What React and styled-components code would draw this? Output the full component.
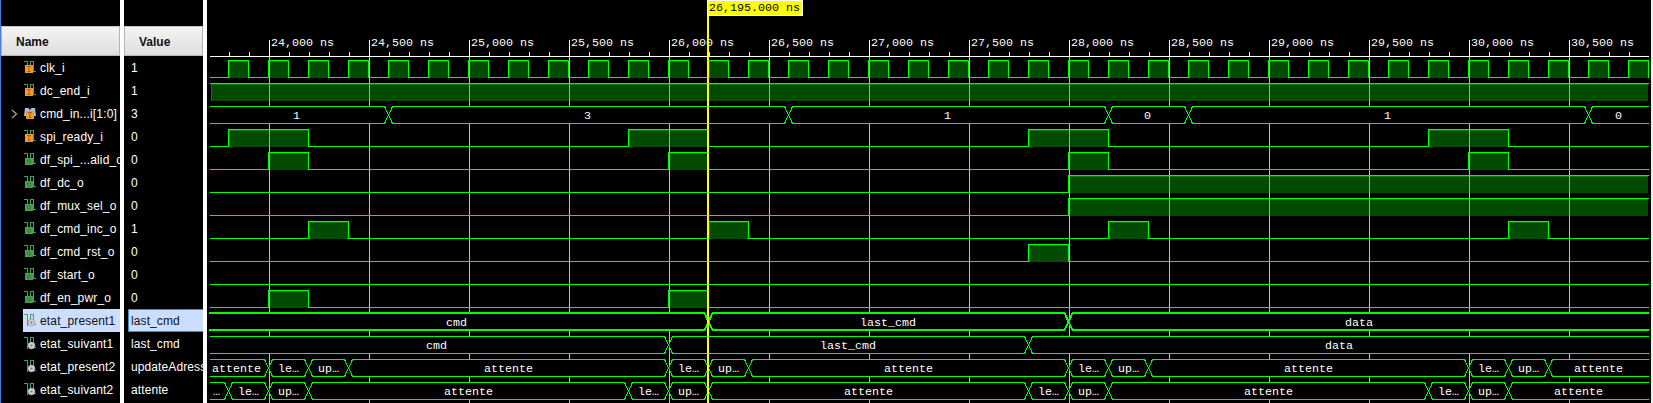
import React from "react";
import styled, { createGlobalStyle, css } from "styled-components";

const GlobalStyle = createGlobalStyle`
  html, body, #root { margin: 0; padding: 0; height: 100%; }
  body { background: #f4f2f0; overflow: hidden; }
  * { box-sizing: border-box; }
`;

const GREEN = "#00ff00";
const FILL = "#004b00";
const EDGE = "#008000";
const GRID = "#c0c0c0";
const START = 210;
const END = 1649;

const Window = styled.div`
  display: flex;
  width: 1653px;
  height: 403px;
  border-left: 1px solid #4a7fd0;
  background: #ffffff;
  font-family: "Liberation Sans", Arial, sans-serif;
  font-size: 12px;
  overflow: hidden;
`;

const Column = styled.section`
  flex: none;
  width: ${(p) => p.$width}px;
  margin-right: 4px;
  padding-top: 26px;
  background: #000;
  overflow: hidden;
`;

const ColumnHeader = styled.header`
  height: 30px;
  padding: 1px 0 0 ${(p) => p.$indent}px;
  border: 1px solid #b4b4b4;
  border-top-color: #c4c4c4;
  background: linear-gradient(#f4f4f4, #dedee0);
  color: #111;
  font-weight: bold;
  line-height: 28px;
`;

const NameRow = styled.div`
  display: flex;
  align-items: center;
  height: 23px;
  margin-left: 22px;
  padding-left: 1px;
  white-space: nowrap;
  color: ${(p) => (p.$selected ? "#111" : "#fff")};
  background: ${(p) => (p.$selected ? "#ccdeff" : "transparent")};
`;

const Expander = styled.svg`
  flex: none;
  margin-left: -13px;
  margin-right: 6px;
`;

const SignalIcon = styled.svg`
  flex: none;
  margin-right: 4px;
`;

const SignalName = styled.span`
  padding-top: 2px;
  letter-spacing: 0.15px;
  line-height: 21px;
`;

const ValueRow = styled.div`
  height: 23px;
  margin-left: 4px;
  padding: 1px 0 0 3px;
  line-height: 23px;
  white-space: nowrap;
  letter-spacing: 0.1px;
  color: #fff;
  ${(p) =>
    p.$selected &&
    css`
      padding-left: 2px;
      line-height: 21px;
      color: #111;
      background: #ccdeff;
      border: 1px solid #3a8ddb;
      border-right: 0;
    `}
`;

const WavePanel = styled.section`
  position: relative;
  flex: none;
  width: 1444px;
  height: 403px;
  background: #000;
`;

const Plot = styled.svg`
  display: block;
  shape-rendering: crispEdges;
  text {
    font-family: "Liberation Mono", "Courier New", monospace;
    font-size: 11.67px;
    fill: #fff;
    white-space: pre;
  }
`;

const CursorLabel = styled.div`
  position: absolute;
  left: 500px;
  top: 0;
  width: 96px;
  height: 16px;
  padding: 1px 0 0 1px;
  border: 1px solid #fff;
  background: #ffff00;
  color: #000;
  font: 11.67px/13px "Liberation Mono", "Courier New", monospace;
  white-space: nowrap;
`;

const EdgeStrip = styled.div`
  width: 2px;
  background: #f0eeec;
`;

const stateCycle = ["attente", "le…", "up…"];
const cycle = (n, first) => Array.from({ length: n }, (_, i) => first || i ? stateCycle[i % 3] : "…");

const signals = [
  { name: "clk_i", value: "1", icon: "in", pulses: Array.from({ length: 36 }, (_, i) => [228 + i * 40, 248 + i * 40]) },
  { name: "dc_end_i", value: "1", icon: "in", pulses: [[START, END]] },
  { name: "cmd_in...i[1:0]", value: "3", icon: "bus", cuts: [388, 788, 1108, 1188, 1588], labels: ["1", "3", "1", "0", "1", "0"] },
  { name: "spi_ready_i", value: "0", icon: "in", pulses: [[228, 308], [628, 708], [1028, 1108], [1428, 1508]] },
  { name: "df_spi_...alid_o", value: "0", icon: "out", pulses: [[268, 308], [668, 708], [1068, 1108], [1468, 1508]] },
  { name: "df_dc_o", value: "0", icon: "out", pulses: [[1068, END]] },
  { name: "df_mux_sel_o", value: "0", icon: "out", pulses: [[1068, END]] },
  { name: "df_cmd_inc_o", value: "1", icon: "out", pulses: [[308, 348], [708, 748], [1108, 1148], [1508, 1548]] },
  { name: "df_cmd_rst_o", value: "0", icon: "out", pulses: [[1028, 1068]] },
  { name: "df_start_o", value: "0", icon: "out", pulses: [] },
  { name: "df_en_pwr_o", value: "0", icon: "out", pulses: [[268, 308], [668, 708]] },
  { name: "etat_present1", value: "last_cmd", icon: "state", selected: true, cuts: [708, 1068], labels: ["cmd", "last_cmd", "data"] },
  { name: "etat_suivant1", value: "last_cmd", icon: "state", cuts: [668, 1028], labels: ["cmd", "last_cmd", "data"] },
  {
    name: "etat_present2", value: "updateAdress", icon: "state",
    cuts: [268, 308, 348, 668, 708, 748, 1068, 1108, 1148, 1468, 1508, 1548], labels: cycle(13, true),
  },
  {
    name: "etat_suivant2", value: "attente", icon: "state",
    cuts: [228, 268, 308, 628, 668, 708, 1028, 1068, 1108, 1428, 1468, 1508], labels: cycle(13, false),
  },
];

function KindIcon({ kind }) {
  const trace = "#3fa35a";
  return (
    <SignalIcon width="12" height="13" viewBox="0 0 12 13">
      {kind === "bus" ? (
        <path d="M1 1h3.500l1.500 2l1.500-2H11l1 8H0z" fill="#9cc4dc" />
      ) : (
        <path
          d="M0 0.500H3.500V12M6.500 11V0.500H9.500V10.500H11.500"
          fill="none" stroke={trace} strokeWidth="1.200" shapeRendering="crispEdges"
        />
      )}
      {(kind === "in" || kind === "bus") && (
        <g transform={kind === "bus" ? "translate(1 0)" : undefined}>
          <path d="M1 4H9V12H1z" fill="#f39a2d" />
          <path d="M3 5.500H7M5 5.500V10.500M3.500 10.500H6.500" stroke="#a8621c" fill="none" />
        </g>
      )}
      {kind === "out" && (
        <>
          <path d="M1 5H9V12H1z" fill="#4a9f4c" />
          <circle cx="5" cy="8.500" r="1.700" fill="none" stroke="#2c7434" />
        </>
      )}
      {kind === "state" && (
        <>
          <circle cx="7.500" cy="8.500" r="3.500" fill="#d0d0d0" stroke="#8c8c8c" strokeWidth=".6" />
          <circle cx="7.500" cy="8.500" r="1.100" fill="#777" />
        </>
      )}
    </SignalIcon>
  );
}

function Digital({ y, pulses }) {
  let d = "";
  let x = START;
  pulses.forEach(([a, b]) => {
    if (a > START) d += `M${x} ${y + 17.5}H${a + 0.5}V${y}`;
    d += `M${a} ${y + 0.5}`;
    const end = Math.min(b, END);
    d += `H${end === END ? END : end + 0.5}`;
    if (end < END) d += `V${y + 17.5}`;
    x = end;
  });
  if (x < END) d += `M${x} ${y + 17.5}H${END}`;
  return (
    <g>
      {pulses.map(([a, b]) => {
        const w = Math.min(b, END - 1) - a - 1;
        return (
          <g key={a}>
            <rect x={a + 1} y={y + 1} width={w} height="17" fill={EDGE} />
            <rect x={a + 2} y={y + 2} width={w - 1} height="16" fill={FILL} />
          </g>
        );
      })}
      <path d={d} fill="none" stroke={GREEN} />
    </g>
  );
}

function Bus({ y, cuts, labels, selected }) {
  const top = y + (selected ? 0 : 0.5);
  const bottom = y + (selected ? 17 : 17.5);
  const mid = y + 9;
  const left = selected ? START - 1 : START;
  return (
    <g>
      {labels.map((label, i) => {
        const a = i ? cuts[i - 1] + 0.5 : null;
        const b = i < cuts.length ? cuts[i] + 0.5 : null;
        const lx = a === null ? left : a + 4;
        const rx = b === null ? END : b - 4;
        const side = (level) =>
          `${a === null ? `M${lx} ${level}` : `M${a} ${mid}L${lx} ${level}`}H${rx}${b === null ? "" : `L${b} ${mid}`}`;
        const hull = `M${a ?? lx} ${mid}L${lx} ${top}H${rx}L${b ?? rx} ${mid}L${rx} ${bottom}H${lx}z`;
        const center = ((i ? cuts[i - 1] : 205) + (i < cuts.length ? cuts[i] : END)) / 2;
        const offset = center - label.length * 3.5;
        return (
          <g key={i}>
            <path d={hull} fill="#000" />
            <path d={side(top) + side(bottom)} fill="none" stroke={GREEN} strokeWidth={selected ? 2 : 1} />
            <text x={label.length > 1 ? Math.round(offset) : Math.floor(offset)} y={y + 13}>{label}</text>
          </g>
        );
      })}
    </g>
  );
}

function Waveforms() {
  const majors = Array.from({ length: 14 }, (_, i) => 269 + i * 100);
  const minors = Array.from({ length: 71 }, (_, i) => 229 + i * 20);
  return (
    <Plot width="1444" height="403" viewBox="207 0 1444 403">
      {majors.map((x) => <rect key={x} x={x} y="57" width="1" height="346" fill={GRID} />)}
      {signals.map((s, i) =>
        s.pulses ? <Digital key={s.name} y={60 + i * 23} pulses={s.pulses} /> : <Bus key={s.name} y={60 + i * 23} {...s} />
      )}
      {signals.map((s, i) =>
        (s.pulses || []).map(([a, b]) =>
          majors.filter((x) => x > a && x < b).map((x) => (
            <rect key={`${s.name}${x}`} x={x} y={61 + i * 23} width="1" height="17" fill="#80c080" />
          ))
        )
      )}
      <rect x={START} y="56" width={END - START} height="1" fill="#fff" />
      {minors.map((x) => <rect key={x} x={x} y="52" width="1" height="4" fill="#fff" />)}
      {majors.map((x, i) => (
        <g key={x}>
          <rect x={x} y="40" width="1" height="16" fill="#fff" />
          <text x={x + 2} y="46">{`${(24000 + i * 500).toLocaleString("en-US")} ns`}</text>
        </g>
      ))}
      <rect x="707" y="15" width="2" height="388" fill="#ffff00" />
    </Plot>
  );
}

export default function App() {
  return (
    <>
      <GlobalStyle />
      <Window>
        <Column $width={119}>
          <ColumnHeader $indent={14}>Name</ColumnHeader>
          {signals.map((s) => (
            <NameRow key={s.name} $selected={s.selected}>
              {s.icon === "bus" && (
                <Expander width="7" height="10" viewBox="0 0 7 10">
                  <path d="M1 1l4.500 4l-4.500 4" fill="none" stroke="#a0a0a0" strokeWidth="1.300" />
                </Expander>
              )}
              <KindIcon kind={s.icon} />
              <SignalName>{s.name}</SignalName>
            </NameRow>
          ))}
        </Column>
        <Column $width={79}>
          <ColumnHeader $indent={14}>Value</ColumnHeader>
          {signals.map((s) => <ValueRow key={s.name} $selected={s.selected}>{s.value}</ValueRow>)}
        </Column>
        <WavePanel>
          <Waveforms />
          <CursorLabel>26,195.000 ns</CursorLabel>
        </WavePanel>
        <EdgeStrip />
      </Window>
    </>
  );
}
